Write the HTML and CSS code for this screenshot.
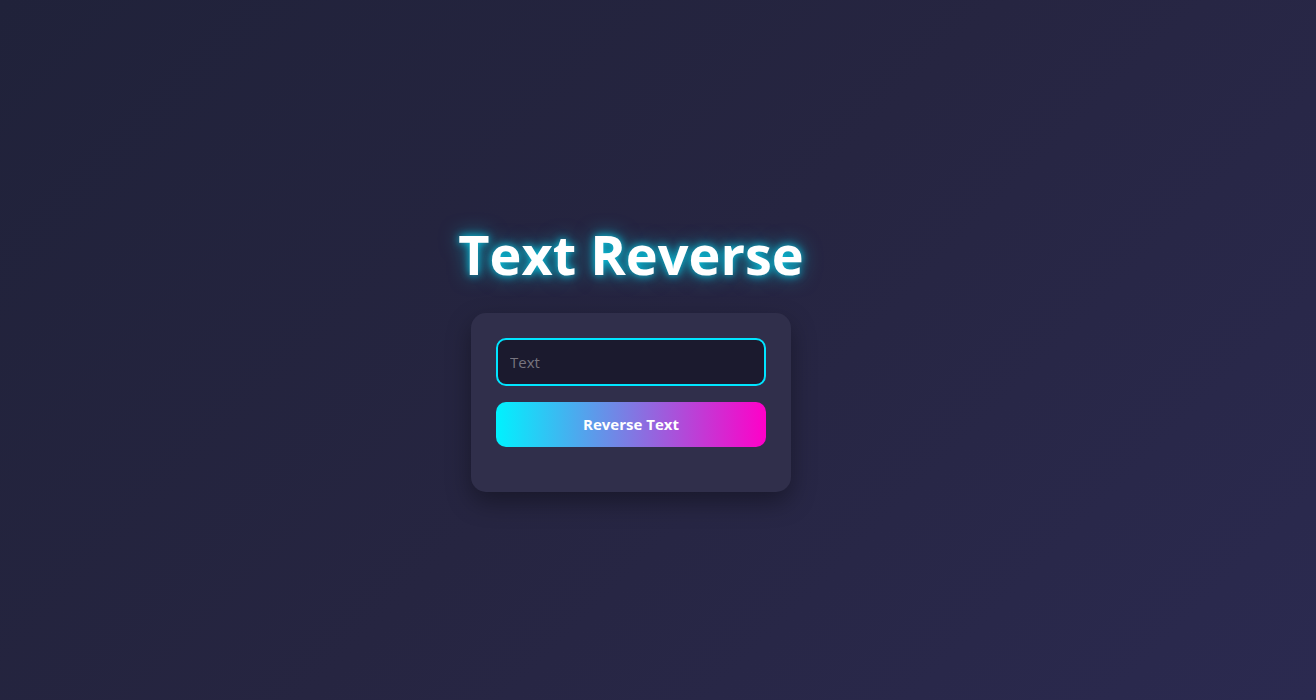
FILE: index.html
```html
<!DOCTYPE html>
<html lang="en">
<head>
<meta charset="UTF-8">
<title>Text Reverse</title>
<link rel="stylesheet" href="styles.css">
</head>
<body>
  <main class="page">
    <h1 class="title">Text Reverse</h1>
    <div class="card">
      <input class="text-input" type="text" placeholder="Text">
      <button class="reverse-btn" type="button">Reverse Text</button>
      <p class="result"></p>
    </div>
  </main>
</body>
</html>
```
FILE: styles.css
```css
* { box-sizing: border-box; }
html, body { height: 100%; }
body {
  margin: 0;
  font-family: "Open Sans", "Noto Sans", "Liberation Sans", sans-serif;
  background: linear-gradient(135deg, #20223a 0%, #262541 50%, #2b2a50 100%);
  color: #fff;
}
.page {
  height: 100%;
  display: flex;
  flex-direction: column;
  align-items: center;
  justify-content: center;
  padding: 14px 54px 0 0;
}
.title {
  margin: 0 0 26px;
  font-size: 54px;
  font-weight: 700;
  line-height: 1.2;
  color: #fff;
  text-shadow: 0 0 8px rgba(0, 229, 255, 0.85), 0 0 20px rgba(0, 229, 255, 0.55);
}
.card {
  width: 320px;
  padding: 25px;
  background: #302f4b;
  border-radius: 15px;
  box-shadow: 0 10px 25px rgba(0, 0, 0, 0.35);
  display: flex;
  flex-direction: column;
  gap: 16px;
}
.text-input {
  width: 100%;
  height: 48px;
  padding: 0 12px;
  border: 2px solid #00e5ff;
  border-radius: 10px;
  background: #1b1a2e;
  color: #fff;
  font-family: inherit;
  font-size: 15px;
  outline: none;
}
.text-input::placeholder { color: #77747f; }
.reverse-btn {
  width: 100%;
  height: 45px;
  border: 0;
  border-radius: 10px;
  background: linear-gradient(90deg, #00f2fe 0%, #ff00c8 100%);
  color: #fff;
  font-family: inherit;
  font-size: 15px;
  font-weight: 700;
  cursor: pointer;
}
.result {
  margin: 4px 0 0;
  min-height: 0;
}
```
